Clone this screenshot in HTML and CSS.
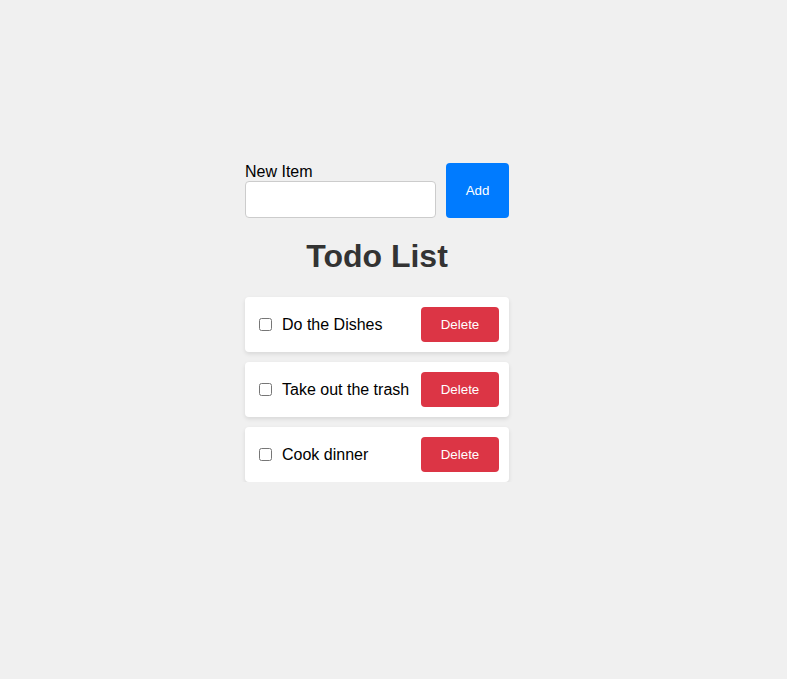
FILE: index.html
```html
<!DOCTYPE html>
<html>
<head>
<meta charset="utf-8">
<link rel="stylesheet" href="styles.css">
</head>
<body>
<div class="app">
  <form class="add-form">
    <div class="field">
      <label class="field-label" for="new">New Item</label>
      <input class="field-input" id="new" type="text">
    </div>
    <button class="btn btn-add" type="button">Add</button>
  </form>
  <h1 class="title">Todo List</h1>
  <ul class="list">
    <li class="item">
      <input class="check" type="checkbox">
      <span class="item-text">Do the Dishes</span>
      <button class="btn btn-delete" type="button">Delete</button>
    </li>
    <li class="item">
      <input class="check" type="checkbox">
      <span class="item-text">Take out the trash</span>
      <button class="btn btn-delete" type="button">Delete</button>
    </li>
    <li class="item">
      <input class="check" type="checkbox">
      <span class="item-text">Cook dinner</span>
      <button class="btn btn-delete" type="button">Delete</button>
    </li>
  </ul>
</div>
</body>
</html>
```
FILE: styles.css
```css
html, body {
  margin: 0;
  padding: 0;
  background: #f0f0f0;
  font-family: "Liberation Sans", Arial, sans-serif;
}
.app {
  width: 264px;
  margin: 163px 0 0 245px;
}
.add-form {
  display: flex;
  gap: 10px;
  margin: 0;
}
.field {
  display: flex;
  flex-direction: column;
  flex: 1;
  min-width: 0;
}
.field-label {
  font-size: 16px;
  line-height: 18px;
  color: #000;
}
.field-input {
  width: 100%;
  height: 37px;
  box-sizing: border-box;
  border: 1px solid #ccc;
  border-radius: 4px;
  padding: 8px;
  font-size: 16px;
  background: #fff;
  margin: 0;
}
.btn {
  font-family: "Liberation Sans", Arial, sans-serif;
  font-size: 13.33px;
  color: #fff;
  border: none;
  border-radius: 4px;
  line-height: 15px;
  cursor: pointer;
}
.btn-add {
  background: #007bff;
  width: 63px;
  padding: 0;
}
.btn-delete {
  background: #dc3545;
  margin-left: auto;
  width: 78px;
  padding: 10px 0;
}
.title {
  text-align: center;
  font-size: 32px;
  font-weight: bold;
  color: #333;
  margin: 20px 0 22px;
  line-height: 37px;
}
.list {
  list-style: none;
  margin: 0;
  padding: 0;
  display: flex;
  flex-direction: column;
  gap: 10px;
}
.item {
  display: flex;
  align-items: center;
  background: #fff;
  border-radius: 4px;
  padding: 10px;
  box-shadow: 0 2px 4px rgba(0,0,0,0.1);
}
.check {
  width: 13px;
  height: 13px;
  margin: 0 0 0 4px;
}
.item-text {
  margin-left: 10px;
  font-size: 16px;
  color: #000;
}
```
